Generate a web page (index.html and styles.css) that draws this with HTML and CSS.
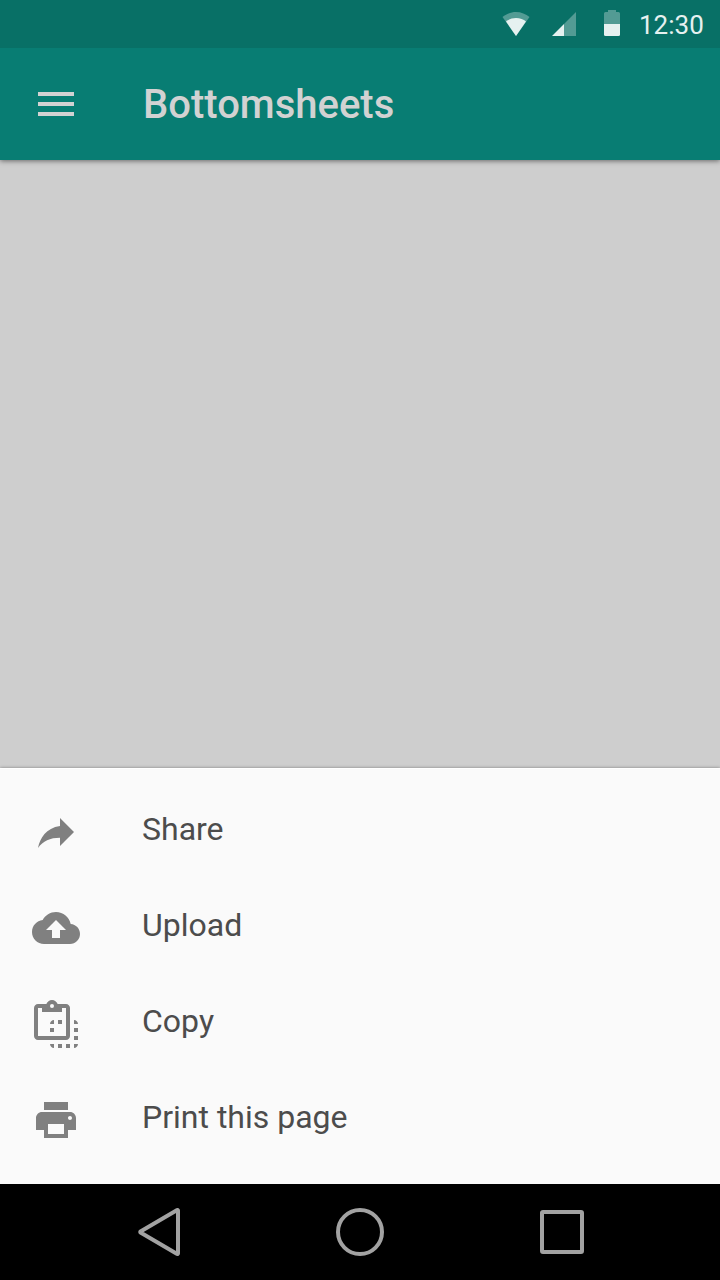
FILE: index.html
```html
<!DOCTYPE html>
<html lang="en">
<head>
<meta charset="utf-8">
<title>Bottomsheets</title>
<link rel="stylesheet" href="styles.css">
</head>
<body>
<div class="screen">
  <div class="status-bar">
    <svg class="status-icon wifi" width="28" height="24" viewBox="0 0 28 24"><path class="dim" d="M14 24 0.500 5C4 2 9 0 14 0s10 2 13.500 5z"/><path d="M14 24 4 9.500C6.500 7.500 10 6 14 6s7.500 1.500 10 3.500z"/></svg>
    <svg class="status-icon cell" width="24" height="24" viewBox="0 0 24 24"><path class="dim" d="M12 12 24 0v24H12z"/><path d="M0 24 12 12v12z"/></svg>
    <svg class="status-icon battery" width="16" height="26" viewBox="0 0 16 26"><path class="dim" d="M0 14V3.500Q0 2 1.500 2H4V0h8v2h2.500Q16 2 16 3.500V14z"/><path d="M0 14h16v10.500q0 1.500-1.500 1.500h-13Q0 26 0 24.500z"/></svg>
    <span class="clock">12:30</span>
  </div>
  <header class="app-bar">
    <svg class="menu-icon" width="48" height="48" viewBox="0 0 24 24"><path d="M3 18h18v-2H3v2zm0-5h18v-2H3v2zm0-7v2h18V6H3z"/></svg>
    <h1 class="title">Bottomsheets</h1>
  </header>
  <main class="content"></main>
  <ul class="sheet">
    <li class="item">
      <svg class="item-icon" viewBox="0 0 24 24"><path d="M14 9V5l7 7-7 7v-4.100c-5 0-8.500 1.600-11 5.100 1-5 4-10 11-11z"/></svg>
      <span class="label">Share</span>
    </li>
    <li class="item">
      <svg class="item-icon" viewBox="0 0 24 24"><path d="M19.350 10.040C18.670 6.590 15.640 4 12 4 9.110 4 6.600 5.640 5.350 8.040 2.340 8.360 0 10.910 0 14c0 3.310 2.690 6 6 6h13c2.760 0 5-2.240 5-5 0-2.640-2.050-4.780-4.650-4.960zM14 13v4h-4v-4H7l5-5 5 5h-3z"/></svg>
      <span class="label">Upload</span>
    </li>
    <li class="item">
      <svg class="item-icon" viewBox="0 0 24 24"><path fill-rule="evenodd" d="M3 2h4.180C7.600.840 8.700 0 10 0s2.400.840 2.820 2H17c1.100 0 2 .900 2 2v14c0 1.100-.900 2-2 2H3c-1.100 0-2-.900-2-2V4c0-1.100.900-2 2-2zM3 4v14h14V4h-2v2H5V4zM10 2a1 1 0 1 0 0 2 1 1 0 0 0 0-2z"/><path d="M9 12c0-1.100.900-2 2-2v2zM13 10h2v2h-2zM21 10c1.100 0 2 .900 2 2h-2zM9 14h2v2H9zM21 14h2v2h-2zM21 18h2v2h-2zM9 22h2v2c-1.100 0-2-.900-2-2zM13 22h2v2h-2zM17 22h2v2h-2zM21 22h2c0 1.100-.900 2-2 2z"/></svg>
      <span class="label">Copy</span>
    </li>
    <li class="item">
      <svg class="item-icon" viewBox="0 0 24 24"><path d="M19 8H5c-1.660 0-3 1.340-3 3v6h4v4h12v-4h4v-6c0-1.660-1.340-3-3-3zm-3 11H8v-5h8v5zm3-7c-.550 0-1-.450-1-1s.450-1 1-1 1 .450 1 1-.450 1-1 1zm-1-9H6v4h12V3z"/></svg>
      <span class="label">Print this page</span>
    </li>
  </ul>
  <nav class="nav-bar">
    <svg width="48" height="48" viewBox="0 0 48 48"><path d="M44 2.500v43a.5.5 0 0 1-.8.4L6.500 24.500a.6.6 0 0 1 0-1L43.200 2.100a.5.5 0 0 1 .8.4z"/></svg>
    <svg width="48" height="48" viewBox="0 0 48 48"><circle cx="24" cy="24" r="22"/></svg>
    <svg width="48" height="48" viewBox="0 0 48 48"><rect x="4" y="4" width="40" height="40" rx="1"/></svg>
  </nav>
</div>
</body>
</html>
```
FILE: styles.css
```css
body {
  margin: 0;
  font-family: Roboto, "Noto Sans", sans-serif;
}

.screen {
  display: flex;
  flex-direction: column;
  width: 720px;
  height: 1280px;
  overflow: hidden;
  background: #cecece;
}

.status-bar {
  position: relative;
  z-index: 1;
  display: flex;
  align-items: flex-start;
  justify-content: flex-end;
  box-sizing: border-box;
  height: 48px;
  padding-right: 17px;
  background: #087066;
}

.status-icon {
  fill: #e6f1f0;
}

.status-icon .dim {
  fill: #539b94;
}

.wifi {
  margin: 12px 22px 0 0;
}

.cell {
  margin: 12px 28px 0 0;
}

.battery {
  margin: 10px 19px 0 0;
}

.clock {
  width: 64px;
  color: #e6f1f0;
  font-size: 26px;
  line-height: 50px;
  white-space: nowrap;
}

.app-bar {
  display: flex;
  align-items: center;
  gap: 63px;
  height: 112px;
  padding-left: 32px;
  background: #087d73;
  box-shadow: 0 1px 5px rgba(0, 0, 0, 0.5);
}

.menu-icon {
  fill: #d2d2d2;
}

.title {
  margin: 0;
  padding-top: 2px;
  color: #d2d2d2;
  font-size: 40px;
  font-weight: 500;
  line-height: 48px;
}

.content {
  flex: 1;
}

.sheet {
  box-sizing: border-box;
  height: 416px;
  margin: 0;
  padding: 16px 0;
  list-style: none;
  background: #fafafa;
  box-shadow: 0 0 3px rgba(0, 0, 0, 0.4), inset 0 1px #fff;
}

.item {
  display: flex;
  align-items: center;
  gap: 62px;
  height: 96px;
  padding-left: 32px;
}

.item-icon {
  width: 48px;
  height: 48px;
  fill: #808080;
}

.label {
  padding-bottom: 6px;
  color: #4c4c4c;
  font-size: 32px;
  line-height: 40px;
}

.nav-bar {
  position: relative;
  display: flex;
  align-items: center;
  justify-content: center;
  gap: 154px;
  height: 96px;
  background: #000;
}

.nav-bar svg {
  fill: none;
  stroke: #a2a2a2;
  stroke-width: 4;
  stroke-linejoin: round;
}
```
